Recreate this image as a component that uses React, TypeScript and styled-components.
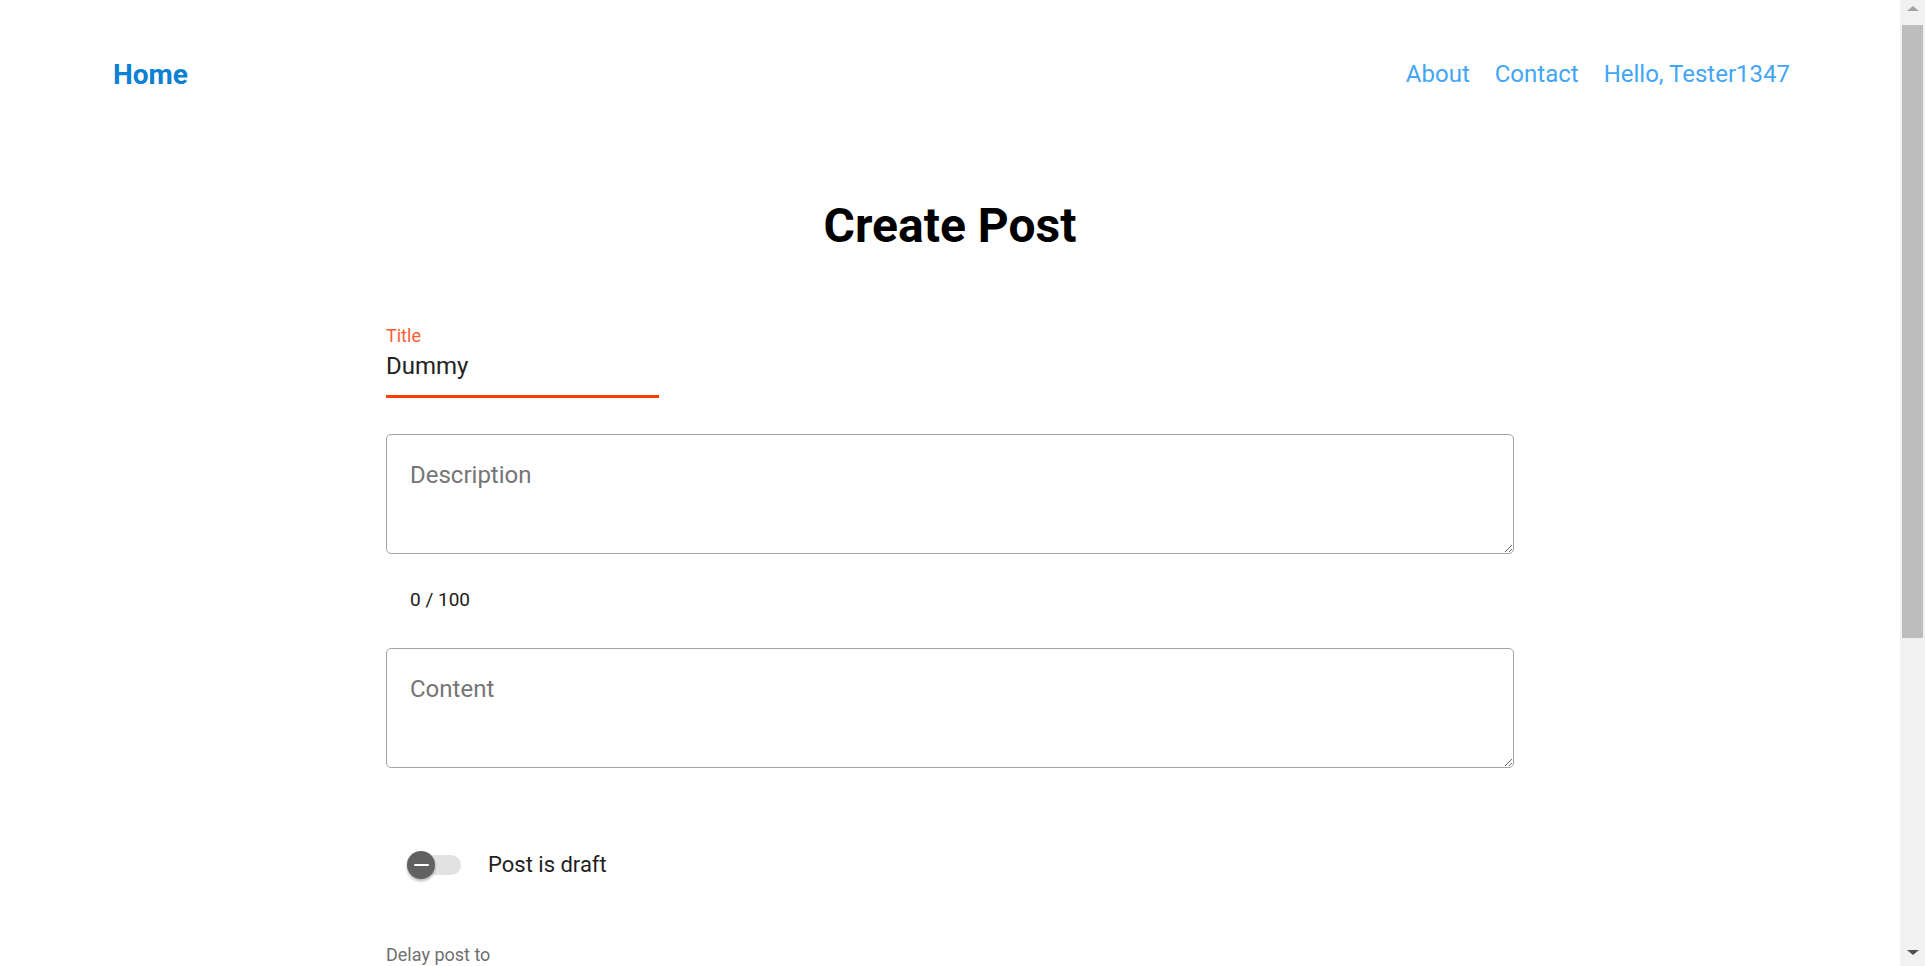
import React, { useState } from "react";
import styled, { createGlobalStyle } from "styled-components";

const GlobalStyle = createGlobalStyle`
  html, body {
    margin: 0;
    padding: 0;
    background: #ffffff;
    font-family: Roboto, "Noto Sans", "Liberation Sans", sans-serif;
  }
  * { box-sizing: border-box; }
`;

const Page = styled.div`
  min-height: 1470px;
  padding-right: 25px;
  background: #fff;
`;

const ScrollBar = styled.div`
  position: fixed;
  top: 0;
  right: 0;
  width: 25px;
  height: 100vh;
  background: #f1f1f1;
  display: flex;
  flex-direction: column;
  align-items: center;
  justify-content: space-between;
  padding: 6px 0 11px;
`;

const ScrollArrow = styled.span<{ $up?: boolean; $color: string }>`
  width: 0;
  height: 0;
  border-left: 6px solid transparent;
  border-right: 6px solid transparent;
  ${(p) =>
    p.$up
      ? `border-bottom: 5px solid ${p.$color};`
      : `border-top: 5px solid ${p.$color};`}
`;

const ScrollThumb = styled.span`
  position: absolute;
  top: 25px;
  left: 2px;
  width: 21px;
  height: 613px;
  background: #bdbdbd;
`;

const Nav = styled.nav`
  height: 148px;
  display: flex;
  align-items: center;
  justify-content: space-between;
  padding: 0 110px 0 113px;
`;

const Brand = styled.a`
  font-size: 28px;
  font-weight: 700;
  color: #0c80d3;
  text-decoration: none;
`;

const NavLinks = styled.div`
  display: flex;
  gap: 25px;
`;

const NavLink = styled.a`
  font-size: 24px;
  font-weight: 400;
  color: #42a5f5;
  text-decoration: none;
`;

const Main = styled.main`
  display: flex;
  flex-direction: column;
  align-items: center;
`;

const Heading = styled.h1`
  margin: 50px 0 0;
  font-size: 48px;
  line-height: 56px;
  font-weight: 700;
  color: #000;
  text-align: center;
`;

const Form = styled.form`
  width: 1128px;
  display: flex;
  flex-direction: column;
  margin-top: 72px;
`;

const UnderlineField = styled.div`
  width: 273px;
  display: flex;
  flex-direction: column;
`;

const FloatLabel = styled.label`
  font-size: 18px;
  line-height: 20px;
  color: #ff5b36;
`;

const UnderlineInput = styled.input`
  border: none;
  border-bottom: 3px solid #ff3d00;
  outline: none;
  padding: 5px 0 14px;
  font-family: inherit;
  font-size: 24px;
  line-height: 30px;
  color: #222;
  background: transparent;
`;

const Area = styled.textarea<{ $top: number }>`
  margin-top: ${(p) => p.$top}px;
  width: 100%;
  height: 120px;
  border: 1px solid #a3a3a3;
  border-radius: 5px;
  padding: 25px 23px 10px;
  font-family: inherit;
  font-size: 24px;
  line-height: 30px;
  color: #222;
  outline: none;
  &::placeholder {
    color: #757575;
  }
`;

const Counter = styled.div`
  margin-top: 34px;
  padding-left: 24px;
  font-size: 19px;
  line-height: 24px;
  color: #1a1a1a;
`;

const SwitchRow = styled.label`
  margin-top: 77px;
  height: 40px;
  display: flex;
  align-items: center;
  padding-left: 21px;
  gap: 27px;
  cursor: pointer;
`;

const Track = styled.span`
  position: relative;
  width: 54px;
  height: 20px;
  display: flex;
  align-items: center;
  justify-content: flex-end;
`;

const TrackBar = styled.span`
  width: 48px;
  height: 20px;
  border-radius: 10px;
  background: #e2e2e2;
`;

const Thumb = styled.span`
  position: absolute;
  left: 0;
  top: -4px;
  width: 28px;
  height: 28px;
  border-radius: 50%;
  background: #616161;
  box-shadow: 0 2px 3px rgba(0, 0, 0, 0.3);
  display: flex;
  align-items: center;
  justify-content: center;
`;

const Minus = styled.span`
  width: 15px;
  height: 2px;
  background: #fff;
  border-radius: 1px;
`;

const SwitchText = styled.span`
  font-size: 22px;
  line-height: 28px;
  color: #1f1f1f;
`;

const SmallLabel = styled.div`
  margin-top: 60px;
  font-size: 18px;
  line-height: 20px;
  color: #6f6f6f;
`;

export default function App() {
  const [title, setTitle] = useState("Dummy");
  const [desc, setDesc] = useState("");
  return (
    <Page>
      <GlobalStyle />
      <Nav>
        <Brand href="#">Home</Brand>
        <NavLinks>
          <NavLink href="#">About</NavLink>
          <NavLink href="#">Contact</NavLink>
          <NavLink href="#">Hello, Tester1347</NavLink>
        </NavLinks>
      </Nav>
      <Main>
        <Heading>Create Post</Heading>
        <Form onSubmit={(e) => e.preventDefault()}>
          <UnderlineField>
            <FloatLabel>Title</FloatLabel>
            <UnderlineInput value={title} onChange={(e) => setTitle(e.target.value)} />
          </UnderlineField>
          <Area
            $top={36}
            placeholder="Description"
            value={desc}
            onChange={(e) => setDesc(e.target.value)}
          />
          <Counter>{desc.length} / 100</Counter>
          <Area $top={36} placeholder="Content" />
          <SwitchRow>
            <Track>
              <TrackBar />
              <Thumb>
                <Minus />
              </Thumb>
            </Track>
            <SwitchText>Post is draft</SwitchText>
          </SwitchRow>
          <SmallLabel>Delay post to</SmallLabel>
        </Form>
      </Main>
      <ScrollBar aria-hidden="true">
        <ScrollArrow $up $color="#a3a3a3" />
        <ScrollThumb />
        <ScrollArrow $color="#505050" />
      </ScrollBar>
    </Page>
  );
}
